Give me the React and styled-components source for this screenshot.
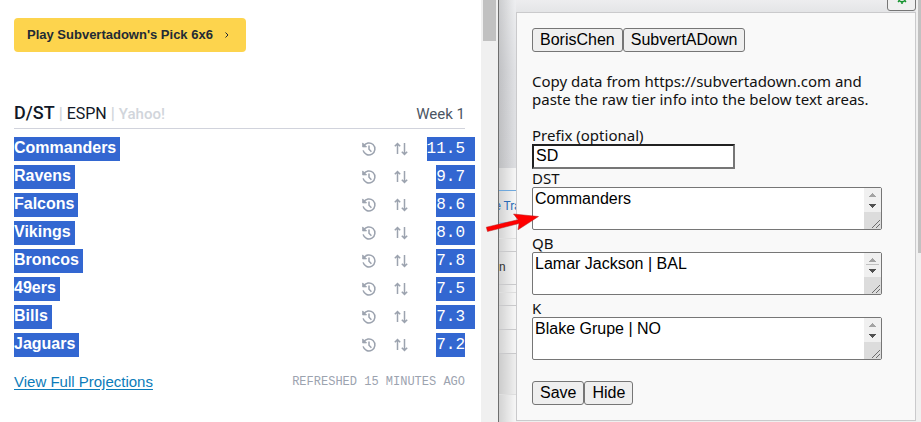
import React from "react";
import styled, { createGlobalStyle } from "styled-components";

const GlobalStyle = createGlobalStyle`
  *, *::before, *::after { box-sizing: border-box; }
  body { margin: 0; background: #fff; overflow: hidden; }
`;

const UI_FONT = `"Liberation Sans", Arial, sans-serif`;
const MONO_FONT = `"Liberation Mono", "Courier New", monospace`;

const Layout = styled.div`
  display: grid;
  grid-template-columns: minmax(0, 499fr) minmax(0, 422fr);
  height: 100vh;
  overflow: hidden;
`;

/* Projections window */

const ProjectionsWindow = styled.section`
  display: flex;
  border-right: 1px solid #6e6e6e;
  background: #fff;
  font-family: ${UI_FONT};
`;

const ProjectionsBody = styled.div`
  flex: 1;
  min-width: 0;
  padding: 18px 16px 0 14px;
`;

const ScrollTrack = styled.div`
  width: 17px;
  padding: 0 2px;
  background: #f0f0f0;
`;

const ScrollThumb = styled.div`
  height: 41px;
  background: #c1c1c1;
`;

const PromoButton = styled.button`
  display: inline-flex;
  align-items: center;
  gap: 11px;
  height: 34px;
  padding: 0 16px 0 13px;
  border: 0;
  border-radius: 4px;
  background: #fdd44d;
  color: #222a35;
  font: 700 13px/18px ${UI_FONT};
`;

const Heading = styled.header`
  display: flex;
  align-items: baseline;
  justify-content: space-between;
  margin-top: 49px;
  padding-bottom: 2px;
  border-bottom: 1px solid #d1d3dc;
  line-height: 23px;
`;

const Sources = styled.div`
  display: flex;
  align-items: baseline;
  gap: 4px;
  font: 400 16px/23px Roboto, sans-serif;
  color: #111827;
`;

const Position = styled.h2`
  margin: 0;
  font: 500 18px/23px Roboto, sans-serif;
`;

const Divider = styled.span`
  color: #d1d5db;
  font-weight: 700;
`;

const MutedSource = styled.span`
  color: #d1d5db;
  font-size: 15px;
  font-weight: 500;
`;

const Week = styled.span`
  color: #4b5563;
  font: 400 15px/23px Roboto, sans-serif;
`;

const TeamTable = styled.table`
  width: 100%;
  margin-top: 6px;
  border-collapse: collapse;

  td { height: 28px; padding: 0; vertical-align: middle; }
`;

const TeamCell = styled.td`
  text-align: left;
`;

const IconCell = styled.td`
  width: 32px;
  color: #9ca3af;

  svg { display: block; }
`;

const ScoreCell = styled.td`
  width: 40px;
  text-align: right;
`;

const Selected = styled.span`
  display: inline-block;
  height: 24px;
  padding-right: 4px;
  background: #3367d1;
  color: #fff;
  font: 700 16px/22px ${UI_FONT};
  vertical-align: middle;
`;

const Score = styled(Selected)`
  margin-right: ${(p) => (p.$last ? "0" : "-10px")};
  padding-right: ${(p) => (p.$last ? "0" : "10px")};
  font: 400 16px/25px ${MONO_FONT};
`;

const ProjectionsFooter = styled.footer`
  display: flex;
  align-items: center;
  justify-content: space-between;
  margin-top: 13px;
`;

const ProjectionsLink = styled.a`
  color: #0c7cba;
  font: 400 15px/20px ${UI_FONT};
  text-underline-offset: 2px;
`;

const Refreshed = styled.span`
  color: #9ca3af;
  font: 400 12px/20px ${MONO_FONT};
`;

/* Settings side */

const SettingsSide = styled.section`
  position: relative;
  display: grid;
  grid-template-columns: 17px minmax(0, 1fr) 5px;
  background: linear-gradient(#ededef 0, #e4e5e7 12px, #efefef 420px);
`;

const PageEdge = styled.div`
  overflow: hidden;
  background:
    linear-gradient(90deg, rgba(0, 0, 0, 0.14), rgba(0, 0, 0, 0) 16px),
    linear-gradient(#edeef0 0, #e0e1e4 70px, #dcdde0 168px, #f5f5f5 168px);
  font: 400 12px/30px Roboto, sans-serif;
`;

const EdgeBand = styled.div`
  height: ${(p) => p.$height}px;
  border-top: 1px solid ${(p) => p.$line || "#c9c9cb"};
  color: ${(p) => p.$color || "#333"};
  background: ${(p) => p.$fill || "transparent"};
  white-space: nowrap;
`;

const EdgeTop = styled.div`
  height: 190px;
`;

const BackTab = styled.div`
  display: flex;
  justify-content: center;
`;

const PanelColumn = styled.div`
  display: flex;
  flex-direction: column;
  align-items: stretch;
`;

const TopBar = styled.div`
  display: flex;
  align-items: flex-end;
  justify-content: flex-end;
  height: 12px;
  padding-bottom: 1px;
`;

const GearButton = styled.button`
  display: flex;
  flex-shrink: 0;
  align-items: flex-end;
  justify-content: center;
  width: 29px;
  height: 24px;
  padding: 0 0 6px;
  border: 1px solid #767676;
  border-radius: 3px;
  background: #f0f0f0;
  color: #16942f;
`;

const Panel = styled.form`
  padding: 15px;
  border: 1px solid #cacacc;
  background: #f9f9f9;
  color: #111;
  font: 400 15px/18px "Noto Sans", sans-serif;
`;

const ButtonRow = styled.div`
  display: flex;
`;

const PlainButton = styled.button`
  height: 24px;
  padding: 0 7px;
  border: 1px solid #767676;
  border-radius: 3px;
  background: #efefef;
  color: #000;
  font: 400 16px/20px ${UI_FONT};
`;

const Instructions = styled.p`
  max-width: 350px;
  margin: 20px 0 18px;
`;

const FieldLabel = styled.label`
  display: block;
`;

const PrefixInput = styled.input`
  display: block;
  width: 203px;
  height: 25px;
  padding: 0 2px 1px;
  border: 2px inset #767676;
  background: #fff;
  color: #000;
  font: 400 16px/18px ${UI_FONT};
`;

const AreaFrame = styled.div`
  display: flex;
  width: 350px;
  max-width: 100%;
  height: 43px;
  margin-bottom: ${(p) => (p.$last ? 21 : 4)}px;
  border: 1px solid #767676;
  border-radius: 2px;
  background: #fff;
`;

const AreaInput = styled.textarea`
  flex: 1;
  min-width: 0;
  padding: 2px;
  border: 0;
  outline: 0;
  resize: none;
  overflow: hidden;
  background: transparent;
  color: #000;
  font: 400 16px/18px ${UI_FONT};
`;

const WindowTrack = styled.div`
  padding-left: 2px;
  background: #f0f0f0;
`;

const WindowThumb = styled.div`
  height: 253px;
  background: #c1c1c1;
`;

const Pointer = styled.svg`
  position: absolute;
  top: 208px;
  left: -15px;
`;

function HistoryIcon() {
  return (
    <svg width="16" height="16" viewBox="0 0 16 16" fill="none" stroke="currentColor" strokeWidth="1.5" aria-label="History">
      <path d="M2.6 5.1A6 6 0 1 1 2.1 9.4" />
      <path d="M1.6 1.9v4h4z" fill="currentColor" strokeWidth="0.8" />
      <path d="M8 4.5v3.700l2.400 2.500" />
    </svg>
  );
}

function SortIcon() {
  return (
    <svg width="16" height="16" viewBox="0 0 16 16" fill="none" stroke="currentColor" strokeWidth="1.5" aria-label="Compare">
      <path d="M4.500 13V3M1.800 5.300 4.500 2.600 7.200 5.300" />
      <path d="M11.500 2v10.500M8.800 10.700l2.700 2.700 2.700-2.700" />
    </svg>
  );
}

function AreaRail({ thumb }) {
  return (
    <svg width="17" height="41" viewBox="0 0 17 41" aria-hidden="true">
      <path fill="#f0f0f0" d="M0 0h17v24H0z" />
      <path fill="#dcdcdc" d="M0 24h17v17H0z" />
      <g shapeRendering="crispEdges">
        <path fill="#a3a3a3" d="M5 9h7V8h-1V7h-1V6H9V5H8v1H7v1H6v1H5z" />
        <path fill="#505050" d="M5 16h7v1h-1v1h-1v1H9v1H8v-1H7v-1H6v-1H5z" />
        {thumb && <path fill="#c1c1c1" d="M2 11h13v1H2z" />}
      </g>
      <path stroke="#505050" strokeWidth="0.800" d="M8 40l8-8M12 40l4-4" />
    </svg>
  );
}

const TEAMS = [
  ["Commanders", "11.5"],
  ["Ravens", "9.7"],
  ["Falcons", "8.6"],
  ["Vikings", "8.0"],
  ["Broncos", "7.8"],
  ["49ers", "7.5"],
  ["Bills", "7.3"],
  ["Jaguars", "7.2"],
];

const AREAS = [
  { id: "dst", label: "DST", value: "Commanders" },
  { id: "qb", label: "QB", value: "Lamar Jackson | BAL", thumb: true },
  { id: "k", label: "K", value: "Blake Grupe | NO" },
];

function Projections() {
  return (
    <ProjectionsWindow>
      <ProjectionsBody>
        <PromoButton type="button">
          Play Subvertadown's Pick 6x6
          <svg width="6" height="8" viewBox="0 0 6 8" fill="none" stroke="currentColor" aria-hidden="true">
            <path d="M1.500 1.500l2.500 2.500-2.500 2.500" />
          </svg>
        </PromoButton>
        <Heading>
          <Sources>
            <Position>D/ST</Position>
            <Divider>|</Divider>
            <span>ESPN</span>
            <Divider>|</Divider>
            <MutedSource>Yahoo!</MutedSource>
          </Sources>
          <Week>Week 1</Week>
        </Heading>
        <TeamTable>
          <tbody>
            {TEAMS.map(([team, score], i) => (
              <tr key={team}>
                <TeamCell><Selected>{team}</Selected></TeamCell>
                <IconCell><HistoryIcon /></IconCell>
                <IconCell><SortIcon /></IconCell>
                <ScoreCell><Score $last={i === TEAMS.length - 1}>{score}</Score></ScoreCell>
              </tr>
            ))}
          </tbody>
        </TeamTable>
        <ProjectionsFooter>
          <ProjectionsLink href="#projections">View Full Projections</ProjectionsLink>
          <Refreshed>REFRESHED 15 MINUTES AGO</Refreshed>
        </ProjectionsFooter>
      </ProjectionsBody>
      <ScrollTrack><ScrollThumb /></ScrollTrack>
    </ProjectionsWindow>
  );
}

function Settings() {
  return (
    <SettingsSide>
      <PageEdge>
        <EdgeTop />
        <EdgeBand $height={32} $line="#6fa8dc" $color="#2c6cb5">
          <BackTab>e Tra</BackTab>
        </EdgeBand>
        <EdgeBand $height={16} $line="#a9c8e6" />
        <EdgeBand $height={13} $line="#dedede" />
        <EdgeBand $height={33}>n</EdgeBand>
        <EdgeBand $height={8} />
        <EdgeBand $height={13} $line="#dedede" />
        <EdgeBand $height={24} />
        <EdgeBand $height={24} />
        <EdgeBand $height={41} $fill="rgba(0, 0, 0, 0.03)" />
        <EdgeBand $height={28} $line="#dedede" />
      </PageEdge>
      <PanelColumn>
        <TopBar>
          <GearButton type="button" aria-label="Settings">
            <svg width="12" height="12" viewBox="0 0 12 12" fill="none" stroke="currentColor" strokeWidth="1.5" aria-hidden="true">
              <circle cx="6" cy="6" r="3.700" />
              <path d="M6 0v2M6 10v2M0 6h2M10 6h2M2 2l1 1M9 9l1 1M10 2 9 3M3 9l-1 1" />
            </svg>
          </GearButton>
        </TopBar>
        <Panel onSubmit={(e) => e.preventDefault()}>
          <ButtonRow>
            <PlainButton type="button">BorisChen</PlainButton>
            <PlainButton type="button">SubvertADown</PlainButton>
          </ButtonRow>
          <Instructions>
            Copy data from https://subvertadown.com and paste the raw tier info into the below text areas.
          </Instructions>
          <FieldLabel htmlFor="prefix">Prefix (optional)</FieldLabel>
          <PrefixInput id="prefix" defaultValue="SD" />
          {AREAS.map(({ id, label, value, thumb }, i) => (
            <React.Fragment key={id}>
              <FieldLabel htmlFor={id}>{label}</FieldLabel>
              <AreaFrame $last={i === AREAS.length - 1}>
                <AreaInput id={id} defaultValue={value} />
                <AreaRail thumb={thumb} />
              </AreaFrame>
            </React.Fragment>
          ))}
          <ButtonRow>
            <PlainButton type="submit">Save</PlainButton>
            <PlainButton type="button">Hide</PlainButton>
          </ButtonRow>
        </Panel>
      </PanelColumn>
      <WindowTrack><WindowThumb /></WindowTrack>
      <Pointer width="58" height="26" viewBox="0 0 58 26" aria-hidden="true">
        <path fill="#f00" stroke="#b02020" strokeWidth="0.500" d="M2.300 19.200 34 11.700 29.500 6 54.500 8.500 34 21.800 35 15.500 3.500 23.500z" />
      </Pointer>
    </SettingsSide>
  );
}

export default function App() {
  return (
    <>
      <GlobalStyle />
      <Layout>
        <Projections />
        <Settings />
      </Layout>
    </>
  );
}
